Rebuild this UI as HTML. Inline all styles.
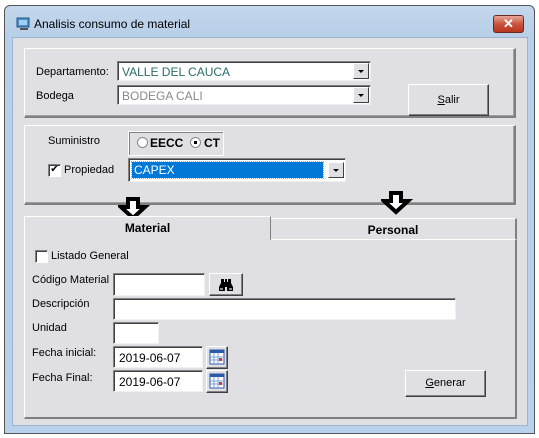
<!DOCTYPE html>
<html><head><style>
*{box-sizing:border-box;margin:0;padding:0}
body{width:539px;height:438px;background:#fff;position:relative;overflow:hidden;font-family:"Liberation Sans",sans-serif;font-size:11px;color:#000}
.a{position:absolute}
.win{left:4px;top:5px;width:531px;height:429px;border:1px solid #555;border-radius:6px 6px 0 0;background:linear-gradient(#c3d7ec,#b7cfe8 30px,#b9d1ea)}
.client{left:12px;top:37px;width:516px;height:389px;background:#e0dfe3;border:1px solid #9fb4cc}
.panel{border-top:1px solid #fff;border-left:1px solid #fff;border-right:2px solid #808080;border-bottom:2px solid #808080;box-shadow:inset -1px -1px 0 #a0a0a0}
.sunk{background:#fff;border-top:1px solid #808080;border-left:1px solid #808080;border-right:1px solid #f0f0f0;border-bottom:1px solid #f0f0f0;box-shadow:inset 1px 1px 0 #404040}
.btn{background:#e0dfe3;border-top:1px solid #fff;border-left:1px solid #fff;border-right:1px solid #404040;border-bottom:1px solid #404040;box-shadow:inset -1px -1px 0 #808080;text-align:center}
.dd{position:absolute;right:1px;top:1px;width:16px;bottom:1px;background:#e0dfe3;border-top:1px solid #fff;border-left:1px solid #fff;border-right:1px solid #404040;border-bottom:1px solid #404040}
.dd:after{content:"";position:absolute;left:4px;top:6px;border-left:3px solid transparent;border-right:3px solid transparent;border-top:3px solid #000}
.cb{width:13px;height:13px;background:#fff;border-top:1px solid #808080;border-left:1px solid #808080;border-right:1px solid #fff;border-bottom:1px solid #fff;box-shadow:inset 1px 1px 0 #404040}
.cal{width:22px;height:23px}
</style></head><body>
<div class="a win"></div>
<svg class="a" style="left:16px;top:17px" width="16" height="14"><rect x="1" y="1" width="12" height="9" fill="#4a8fd0" stroke="#26567f"/><rect x="3" y="3" width="8" height="5" fill="#9fd0f2"/><rect x="4" y="11" width="8" height="2" fill="#555"/></svg>
<div class="a" style="left:34px;top:17px;font-size:12px">Analisis consumo de material</div>
<div class="a" style="left:493px;top:15px;width:31px;height:18px;border:1px solid #6b2a20;border-radius:3px;background:linear-gradient(#e8a697,#c9543e 50%,#b8351f);color:#fff;font-weight:bold;font-size:13px;text-align:center;line-height:16px">✕</div>
<div class="a client"></div>

<div class="a panel" style="left:24px;top:48px;width:492px;height:70px"></div>
<div class="a" style="left:36px;top:66px">Departamento:</div>
<div class="a sunk" style="left:117px;top:61px;width:254px;height:20px;color:#2a6a6a;padding:3px 4px;font-size:12px">VALLE DEL CAUCA<div class="dd"></div></div>
<div class="a" style="left:36px;top:90px">Bodega</div>
<div class="a sunk" style="left:117px;top:85px;width:254px;height:20px;color:#888;padding:3px 4px;font-size:12px;background:#fff">BODEGA CALI<div class="dd"></div></div>
<div class="a btn" style="left:408px;top:84px;width:81px;height:32px;line-height:30px"><u>S</u>alir</div>

<div class="a panel" style="left:24px;top:125px;width:492px;height:80px"></div>
<div class="a" style="left:48px;top:135px">Suministro</div>
<div class="a" style="left:128px;top:131px;width:96px;height:25px;border:1px solid #fff;box-shadow:inset 1px 1px 0 #808080"></div>
<div class="a" style="left:137px;top:137px;width:11px;height:11px;border-radius:50%;background:#fff;border:1px solid #888"></div>
<div class="a" style="left:150px;top:136px;font-weight:bold;font-size:12px">EECC</div>
<div class="a" style="left:190px;top:137px;width:11px;height:11px;border-radius:50%;background:#fff;border:1px solid #888"><div style="margin:3px;width:3px;height:3px;background:#000"></div></div>
<div class="a" style="left:204px;top:136px;font-weight:bold;font-size:12px">CT</div>
<div class="a cb" style="left:48px;top:164px;font-size:10px;line-height:10px;text-align:center">✔</div>
<div class="a" style="left:64px;top:164px">Propiedad</div>
<div class="a sunk" style="left:128px;top:158px;width:218px;height:24px;padding:3px"><div style="background:#0078d7;color:#fff;height:16px;width:191px;outline:1px dotted #f90;padding:1px 2px;font-size:12px">CAPEX</div><div class="dd" style="top:3px;bottom:3px"></div></div>

<svg class="a" style="left:118px;top:197px" width="32" height="24"><path d="M10 2h10v8h7L15 21 3 10h7z" fill="#fff" stroke="#000" stroke-width="4" stroke-linejoin="miter"/></svg>
<svg class="a" style="left:381px;top:191px" width="32" height="24"><path d="M10 2h10v8h7L15 21 3 10h7z" fill="#fff" stroke="#000" stroke-width="4" stroke-linejoin="miter"/></svg>

<div class="a" style="left:24px;top:239px;width:493px;height:180px;border-left:1px solid #fff;border-right:2px solid #808080;border-bottom:2px solid #808080"></div>
<div class="a" style="left:24px;top:216px;width:247px;height:24px;border-top:1px solid #fff;border-left:1px solid #fff;border-right:1px solid #808080;text-align:center;font-weight:bold;font-size:12px;line-height:22px;background:#e0dfe3">Material</div>
<div class="a" style="left:271px;top:218px;width:246px;height:22px;border-top:1px solid #fff;border-right:2px solid #808080;border-bottom:1px solid #fff;text-align:center;font-weight:bold;font-size:12px;line-height:22px">Personal</div>

<div class="a cb" style="left:35px;top:250px"></div>
<div class="a" style="left:51px;top:250px">Listado General</div>
<div class="a" style="left:32px;top:274px">Código Material</div>
<div class="a sunk" style="left:113px;top:273px;width:92px;height:23px"></div>
<div class="a btn" style="left:209px;top:273px;width:34px;height:23px"><svg width="16" height="14" style="margin-top:4px"><path d="M3 1h3v3h1v-3h2v3h1v-3h3v4l2 4v4h-6v-4h-2v4h-6v-4l2-4z" fill="#000"/><rect x="2" y="10" width="3" height="2" fill="#888"/><rect x="11" y="10" width="3" height="2" fill="#888"/></svg></div>
<div class="a" style="left:32px;top:298px">Descripción</div>
<div class="a sunk" style="left:113px;top:298px;width:343px;height:22px"></div>
<div class="a" style="left:32px;top:322px">Unidad</div>
<div class="a sunk" style="left:113px;top:322px;width:46px;height:22px"></div>
<div class="a" style="left:32px;top:347px">Fecha inicial:</div>
<div class="a sunk" style="left:113px;top:346px;width:90px;height:22px;padding:4px 5px;font-size:12px">2019-06-07</div>
<div class="a btn cal" style="left:206px;top:346px"><svg width="18" height="18" style="margin-top:1px"><rect x="2" y="2" width="14" height="14" fill="#fff" stroke="#2a5ba8"/><rect x="2" y="2" width="14" height="3" fill="#2a5ba8"/><path d="M6 5v11M10 5v11M2 9h14M2 12h14" stroke="#7aa0d8"/><rect x="11" y="10" width="3" height="3" fill="#d33"/></svg></div>
<div class="a" style="left:32px;top:372px">Fecha Final:</div>
<div class="a sunk" style="left:113px;top:370px;width:90px;height:22px;padding:4px 5px;font-size:12px">2019-06-07</div>
<div class="a btn cal" style="left:206px;top:370px"><svg width="18" height="18" style="margin-top:1px"><rect x="2" y="2" width="14" height="14" fill="#fff" stroke="#2a5ba8"/><rect x="2" y="2" width="14" height="3" fill="#2a5ba8"/><path d="M6 5v11M10 5v11M2 9h14M2 12h14" stroke="#7aa0d8"/><rect x="11" y="10" width="3" height="3" fill="#d33"/></svg></div>
<div class="a btn" style="left:405px;top:370px;width:81px;height:27px;line-height:25px"><u>G</u>enerar</div>
</body></html>
